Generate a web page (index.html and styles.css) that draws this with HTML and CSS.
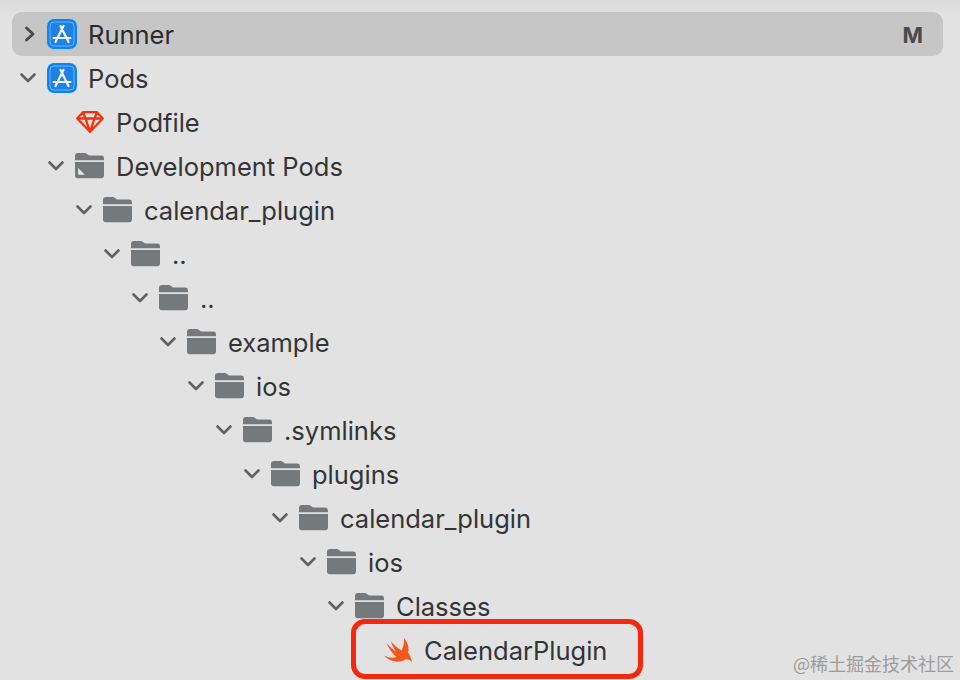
FILE: index.html
```html
<!DOCTYPE html>
<html lang="en">
<head>
<meta charset="utf-8">
<title>Project navigator</title>
<link rel="stylesheet" href="styles.css">
</head>
<body>
<svg class="defs" width="0" height="0" aria-hidden="true">
  <symbol id="chev-down" viewBox="0 0 18 18"><path d="M2.500 5.500 9 12l6.500-6.500" fill="none" stroke="#5f6060" stroke-width="2.600" stroke-linecap="round" stroke-linejoin="round"/></symbol>
  <symbol id="chev-right" viewBox="0 0 18 18"><path d="M7.500 3 14 9l-6.500 6" fill="none" stroke="#4a4a4a" stroke-width="2.800" stroke-linecap="round" stroke-linejoin="round"/></symbol>
  <symbol id="folder" viewBox="1 1 28 24.500"><path d="M1 8V4q0-3 3-3h6q1.800 0 3 1.200L14.500 3.500H26q3 0 3 3V8z" fill="#74797b"/><path d="M1 9.600h28v12.900q0 3-3 3H4q-3 0-3-3z" fill="#74797b"/></symbol>
  <symbol id="folder-dev" viewBox="1 1 28 24.500"><path d="M1 8V4q0-3 3-3h6q1.800 0 3 1.200L14.500 3.500H26q3 0 3 3V8z" fill="#74797b"/><path d="M1 9.600h28v12.900q0 3-3 3H4q-3 0-3-3z" fill="#74797b"/><path d="M4 15.500 10.500 22H4.500q-.5 0-.5-.5z" fill="#e6e6e6"/></symbol>
  <symbol id="app" viewBox="0 0 30 30"><rect width="30" height="30" rx="7" fill="#0d84f5"/><rect x="3" y="3" width="24" height="24" rx="4" fill="#1f80e6" stroke="#6fb4f6" stroke-width="1"/><path d="M13.500 7 21.500 23M16.500 7 8.500 23M6.500 19h17" fill="none" stroke="#f4f8fd" stroke-width="2.200" stroke-linecap="round"/></symbol>
  <symbol id="gem" viewBox="0 0 28 22"><path d="M7 1.200h14l5.800 6.300L14 20.800 1.200 7.500z M1.200 7.500h25.600 M7 1.200l2.500 6.300L14 20.800l4.500-13.300L21 1.200" fill="none" stroke="#f5320f" stroke-width="2.300" stroke-linejoin="round"/></symbol>
  <symbol id="swift" viewBox="0 0 28 25"><path d="M20 0C24 5 25.500 10 24 14.500 26 17 27.500 20.500 28 24.500 26.500 22 24 20.800 21.500 21.300 17 24.800 7 25 0 17.500 5 20 9 20.300 12.500 19 8 15.500 4.500 10 2.500 5 6 9 9 11.500 12 14 10 10.500 8 7 7 3.500 10.500 7.500 14 10.500 17.500 12.500 19.500 8.500 20.500 4 20 0Z" fill="#f4581c"/></symbol>
</svg>

<main class="tree">
  <div class="row selected d0">
    <svg class="chev"><use href="#chev-right"/></svg>
    <svg class="icon app"><use href="#app"/></svg>
    <span class="label">Runner</span>
    <span class="badge">M</span>
  </div>
  <div class="row d0">
    <svg class="chev"><use href="#chev-down"/></svg>
    <svg class="icon app"><use href="#app"/></svg>
    <span class="label">Pods</span>
  </div>
  <div class="row d1">
    <span class="chev"></span>
    <svg class="icon gem"><use href="#gem"/></svg>
    <span class="label">Podfile</span>
  </div>
  <div class="row d1">
    <svg class="chev"><use href="#chev-down"/></svg>
    <svg class="icon"><use href="#folder-dev"/></svg>
    <span class="label">Development Pods</span>
  </div>
  <div class="row d2">
    <svg class="chev"><use href="#chev-down"/></svg>
    <svg class="icon"><use href="#folder"/></svg>
    <span class="label">calendar_plugin</span>
  </div>
  <div class="row d3">
    <svg class="chev"><use href="#chev-down"/></svg>
    <svg class="icon"><use href="#folder"/></svg>
    <span class="label">..</span>
  </div>
  <div class="row d4">
    <svg class="chev"><use href="#chev-down"/></svg>
    <svg class="icon"><use href="#folder"/></svg>
    <span class="label">..</span>
  </div>
  <div class="row d5">
    <svg class="chev"><use href="#chev-down"/></svg>
    <svg class="icon"><use href="#folder"/></svg>
    <span class="label">example</span>
  </div>
  <div class="row d6">
    <svg class="chev"><use href="#chev-down"/></svg>
    <svg class="icon"><use href="#folder"/></svg>
    <span class="label">ios</span>
  </div>
  <div class="row d7">
    <svg class="chev"><use href="#chev-down"/></svg>
    <svg class="icon"><use href="#folder"/></svg>
    <span class="label">.symlinks</span>
  </div>
  <div class="row d8">
    <svg class="chev"><use href="#chev-down"/></svg>
    <svg class="icon"><use href="#folder"/></svg>
    <span class="label">plugins</span>
  </div>
  <div class="row d9">
    <svg class="chev"><use href="#chev-down"/></svg>
    <svg class="icon"><use href="#folder"/></svg>
    <span class="label">calendar_plugin</span>
  </div>
  <div class="row d10">
    <svg class="chev"><use href="#chev-down"/></svg>
    <svg class="icon"><use href="#folder"/></svg>
    <span class="label">ios</span>
  </div>
  <div class="row d11">
    <svg class="chev"><use href="#chev-down"/></svg>
    <svg class="icon"><use href="#folder"/></svg>
    <span class="label">Classes</span>
  </div>
  <div class="row d12">
    <span class="chev"></span>
    <svg class="icon swift"><use href="#swift"/></svg>
    <span class="label">CalendarPlugin</span>
  </div>
</main>
<div class="highlight"></div>
<div class="watermark">@稀土掘金技术社区</div>
</body>
</html>
```

FILE: styles.css
```css
* { box-sizing: border-box; }
html, body { margin: 0; height: 100%; }
body {
  position: relative;
  width: 960px;
  height: 680px;
  overflow: hidden;
  background: linear-gradient(#d9d9d9 0, #e2e2e2 14px);
  font-family: "Inter", "Liberation Sans", sans-serif;
  color: #333435;
}
.defs { position: absolute; }
.tree {
  display: flex;
  flex-direction: column;
  padding: 12px 17px 0 12px;
}
.row {
  display: flex;
  align-items: center;
  flex: none;
  height: 44px;
  padding-right: 20px;
}
.d0 { padding-left: 7px; }
.d1 { padding-left: 35px; }
.d2 { padding-left: 63px; }
.d3 { padding-left: 91px; }
.d4 { padding-left: 119px; }
.d5 { padding-left: 147px; }
.d6 { padding-left: 175px; }
.d7 { padding-left: 203px; }
.d8 { padding-left: 231px; }
.d9 { padding-left: 259px; }
.d10 { padding-left: 287px; }
.d11 { padding-left: 315px; }
.d12 { padding-left: 343px; }
.selected {
  background: #c6c6c6;
  border-radius: 10px;
}
.chev {
  flex: none;
  width: 18px;
  height: 18px;
  margin-right: 11px;
}
.icon {
  flex: none;
  width: 29px;
  height: 25.400px;
  margin: 0 12px 0 -1px;
}
.icon.app { width: 30px; height: 30px; margin: 0 11px 0 -1px; }
.icon.gem { width: 28px; height: 22px; margin: 0 12px 0 0; }
.icon.swift { width: 28px; height: 25px; margin: 0 12px 0 0; }
.label {
  padding-top: 2px;
  font-size: 25.500px;
  line-height: 42px;
  white-space: nowrap;
}
.selected .label { color: #2a2b2c; }
.badge {
  margin-left: auto;
  padding-top: 2px;
  font-size: 22px;
  font-weight: 700;
  color: #4a4a4a;
}
.highlight {
  position: absolute;
  left: 351px;
  top: 619px;
  width: 292px;
  height: 60px;
  border: 5.500px solid #f5280f;
  border-radius: 14px;
}
.watermark {
  position: absolute;
  right: 6px;
  bottom: 5px;
  font-family: "Noto Sans CJK SC", "Noto Sans", sans-serif;
  font-size: 18px;
  line-height: 24px;
  color: #9c9c9c;
}
```
